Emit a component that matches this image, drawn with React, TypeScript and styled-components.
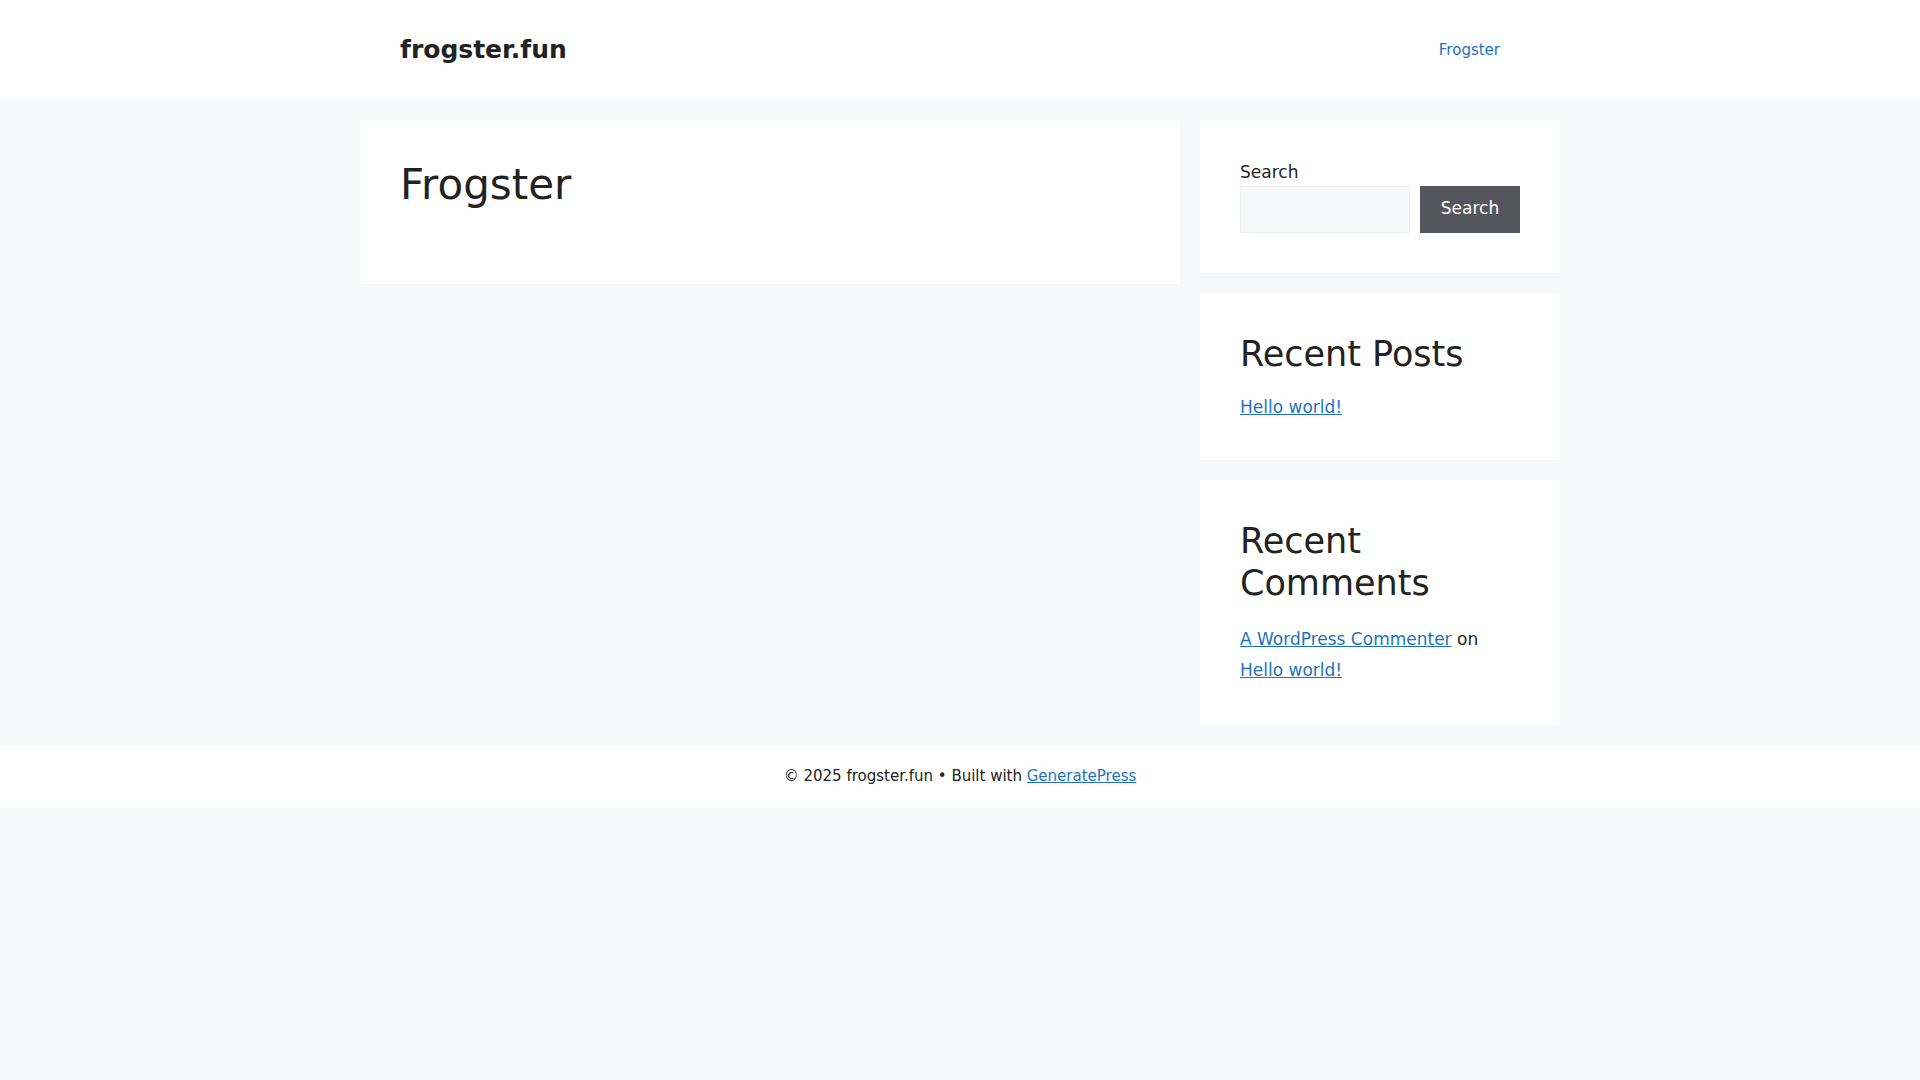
import type { FC } from 'react';
import styled, { createGlobalStyle } from 'styled-components';

const GlobalStyle = createGlobalStyle`
  html, body {
    margin: 0;
    padding: 0;
  }
  body {
    background: #f7f8f9;
    color: #222222;
    font-family: "DejaVu Sans", "Noto Sans", sans-serif;
    font-size: 17px;
    line-height: 1.5;
  }
  *, *::before, *::after {
    box-sizing: border-box;
  }
  a {
    color: #1e73be;
  }
`;

const Header = styled.header`
  background: #ffffff;
`;

const InsideHeader = styled.div`
  width: 1200px;
  margin: 0 auto;
  padding: 20px 40px;
  display: flex;
  align-items: center;
  justify-content: space-between;
`;

const SiteTitle = styled.p`
  margin: 0;
  font-size: 25px;
  font-weight: bold;
  line-height: 1.5;

  a {
    color: #222222;
    text-decoration: none;
  }
`;

const NavList = styled.ul`
  display: flex;
  margin: 0;
  padding: 0;
  list-style: none;
`;

const NavLink = styled.a<{ $current?: boolean }>`
  display: block;
  padding: 0 20px;
  line-height: 60px;
  font-size: 15px;
  text-decoration: none;
  color: ${(p) => (p.$current ? '#1e73be' : '#515151')};
`;

const SiteContent = styled.div`
  width: 1200px;
  margin: 0 auto;
  display: flex;
  align-items: flex-start;
`;

const ContentArea = styled.main`
  width: 70%;
  padding: 20px 20px 20px 0;
`;

const Article = styled.article`
  background: #ffffff;
  padding: 40px;
`;

const EntryTitle = styled.h1`
  margin: 0 0 34px;
  font-size: 42px;
  font-weight: normal;
  line-height: 1.2;
`;

const Sidebar = styled.aside`
  width: 30%;
  padding: 20px 0;
  display: flex;
  flex-direction: column;
  gap: 20px;
`;

const Widget = styled.section`
  background: #ffffff;
  padding: 40px;
`;

const SearchLabel = styled.label`
  display: block;
  font-weight: normal;
`;

const SearchRow = styled.div`
  display: flex;
  gap: 10px;
`;

const SearchInput = styled.input`
  flex: 1;
  min-width: 0;
  height: 47px;
  border: 1px solid #eeeff1;
  background: #f7f8f9;
  padding: 10px 15px;
  font: inherit;
  color: #222222;
  outline: none;
`;

const SearchButton = styled.button`
  width: 100px;
  height: 47px;
  border: 0;
  background: #55555e;
  color: #ffffff;
  font: inherit;
  padding: 10px 20px;
  cursor: pointer;
`;

const WidgetTitle = styled.h2`
  margin: 0 0 20px;
  font-size: 35px;
  font-weight: normal;
  line-height: 1.2;
`;

const LinkList = styled.ul`
  margin: 0;
  padding: 0;
  list-style: none;
`;

const CommentItem = styled.li`
  line-height: 1.8;
`;

const Footer = styled.footer`
  background: #ffffff;
`;

const SiteInfo = styled.div`
  width: 1200px;
  margin: 0 auto;
  padding: 20px 40px;
  text-align: center;
  font-size: 15px;
  line-height: 1.5;
`;

const App: FC = () => {
  return (
    <>
      <GlobalStyle />
      <Header>
        <InsideHeader>
          <SiteTitle>
            <a href="#">frogster.fun</a>
          </SiteTitle>
          <nav>
            <NavList>
              <li>
                <NavLink href="#" $current>
                  Frogster
                </NavLink>
              </li>
            </NavList>
          </nav>
        </InsideHeader>
      </Header>

      <SiteContent>
        <ContentArea>
          <Article>
            <EntryTitle>Frogster</EntryTitle>
          </Article>
        </ContentArea>

        <Sidebar>
          <Widget>
            <SearchLabel htmlFor="search-input">Search</SearchLabel>
            <SearchRow>
              <SearchInput id="search-input" type="search" />
              <SearchButton type="button">Search</SearchButton>
            </SearchRow>
          </Widget>

          <Widget>
            <WidgetTitle>Recent Posts</WidgetTitle>
            <LinkList>
              <li>
                <a href="#">Hello world!</a>
              </li>
            </LinkList>
          </Widget>

          <Widget>
            <WidgetTitle>Recent Comments</WidgetTitle>
            <LinkList>
              <CommentItem>
                <a href="#">A WordPress Commenter</a> on{' '}
                <a href="#">Hello world!</a>
              </CommentItem>
            </LinkList>
          </Widget>
        </Sidebar>
      </SiteContent>

      <Footer>
        <SiteInfo>
          © 2025 frogster.fun • Built with <a href="#">GeneratePress</a>
        </SiteInfo>
      </Footer>
    </>
  );
};

export default App;
